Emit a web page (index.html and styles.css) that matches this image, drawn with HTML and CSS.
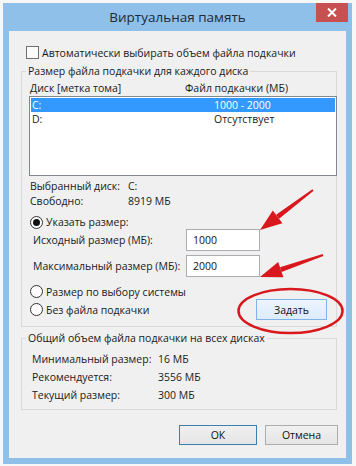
FILE: index.html
```html
<!DOCTYPE html>
<html lang="ru">

<head>
    <meta charset="UTF-8">
    <meta name="viewport" content="width=device-width, initial-scale=1.0">
    <title>Виртуальная память</title>
    <link rel="stylesheet" href="styles.css">
</head>

<body>
    <div class="window">
        <div class="titlebar">
            <span></span>
            <h1 class="title">Виртуальная память</h1>
            <button class="close" type="button" aria-label="Закрыть">
                <svg width="10" height="9" viewBox="0 0 10 9">
                    <path d="M1 0.5 L9 8.5 M9 0.5 L1 8.5" stroke="#fff" stroke-width="2" />
                </svg>
            </button>
        </div>

        <div class="content">
            <!-- Автоматический выбор -->
            <label class="check-row">
                <span class="checkbox"></span>
                Автоматически выбирать объем файла подкачки
            </label>

            <!-- Размер для каждого диска -->
            <fieldset class="group group-disks">
                <legend>Размер файла подкачки для каждого диска</legend>
                <div class="group-inner">
                    <div class="list-head">
                        <span>Диск [метка тома]</span>
                        <span>Файл подкачки (МБ)</span>
                    </div>
                    <div class="listbox">
                        <div class="list-row selected"><span>C:</span><span>1000 - 2000</span></div>
                        <div class="list-row"><span>D:</span><span>Отсутствует</span></div>
                    </div>

                    <div class="info">
                        <span>Выбранный диск:</span><span>C:</span>
                        <span>Свободно:</span><span>8919 МБ</span>
                    </div>

                    <div class="radio-row first">
                        <span class="radio checked"></span>Указать размер:
                    </div>
                    <div class="size-row">
                        <label for="initSize">Исходный размер (МБ):</label>
                        <input type="text" id="initSize" value="1000">
                    </div>
                    <div class="size-row second">
                        <label for="maxSize">Максимальный размер (МБ):</label>
                        <input type="text" id="maxSize" value="2000">
                    </div>

                    <div class="bottom-options">
                        <div class="radios">
                            <div class="radio-row"><span class="radio"></span>Размер по выбору системы</div>
                            <div class="radio-row"><span class="radio"></span>Без файла подкачки</div>
                        </div>
                        <button class="btn btn-set" type="button">Задать</button>
                    </div>
                </div>
            </fieldset>

            <!-- Общий объем -->
            <fieldset class="group group-total">
                <legend>Общий объем файла подкачки на всех дисках</legend>
                <div class="totals">
                    <span>Минимальный размер:</span><span>16 МБ</span>
                    <span>Рекомендуется:</span><span>3556 МБ</span>
                    <span>Текущий размер:</span><span>300 МБ</span>
                </div>
            </fieldset>

            <div class="actions">
                <button class="btn btn-ok" type="button">ОК</button>
                <button class="btn btn-cancel" type="button">Отмена</button>
            </div>
        </div>
    </div>

    <!-- Пометки поверх скриншота -->
    <svg class="marks" width="356" height="466" viewBox="0 0 356 466">
        <polygon fill="#d8181c" points="313.6,190.8 312.4,189.2 276.1,214.8 279.1,218.8" />
        <polygon fill="#d8181c" points="260,230 282.4,223.2 272.8,210.4" />
        <polygon fill="#d8181c" points="323.3,255.9 322.7,254.1 280.0,267.3 281.6,272.1" />
        <polygon fill="#d8181c" points="260,277 283.4,277.3 278.2,262.1" />
        <ellipse cx="290.5" cy="311" rx="52" ry="22" fill="none" stroke="#d8181c" stroke-width="2.5" />
    </svg>
</body>

</html>
```

FILE: styles.css
```css
body {
    margin: 0;
    background-color: #f7f7f7;
    font-family: "Open Sans", "Noto Sans", sans-serif;
    font-size: 10.5px;
    color: #1a1a1a;
}

.window {
    width: 349px;
    height: 461px;
    margin: 3px 0 0 3px;
    background-color: #8fc0ea;
    display: flex;
    flex-direction: column;
}

.titlebar {
    height: 28px;
    display: grid;
    grid-template-columns: 1fr auto 1fr;
}

.title {
    margin: 0;
    font-size: 13.5px;
    font-weight: normal;
    line-height: 28px;
    color: #1f2a36;
}

.close {
    justify-self: end;
    width: 32px;
    height: 19px;
    margin-right: 4px;
    padding: 0;
    border: none;
    background-color: #c75050;
    display: flex;
    align-items: center;
    justify-content: center;
}

.content {
    flex: 1;
    margin: 0 6px 6px 6px;
    background-color: #f0f0f0;
    padding-top: 14px;
}

.check-row {
    display: flex;
    align-items: center;
    height: 15px;
    padding-left: 17px;
}

.checkbox {
    width: 11px;
    height: 11px;
    border: 1px solid #707070;
    background-color: #fafafa;
    margin-right: 3px;
}

/* Групповые рамки */
.group {
    border: 1px solid #d9d9d9;
    margin: 4px 9px 0 12px;
    padding: 0;
    min-width: 0;
}

.group legend {
    padding: 0 2px;
    margin-left: 4px;
    line-height: 15px;
}

.group-inner {
    padding: 2px 0 6px 0;
}

.list-head {
    display: grid;
    grid-template-columns: 155px 1fr;
    padding-left: 8px;
    line-height: 15px;
}

.listbox {
    margin-left: 7px;
    border: 1px solid #828790;
    background-color: #fff;
    padding: 1px;
    width: 304px;
    height: 76px;
}

.list-row {
    display: grid;
    grid-template-columns: 182px 1fr;
    height: 14px;
    line-height: 14px;
    padding-left: 1px;
}

.list-row.selected {
    background-color: #3399ff;
    color: #fff;
}

.info {
    display: grid;
    grid-template-columns: 98px 1fr;
    margin: 3px 0 0 8px;
    line-height: 15px;
}

.radio-row {
    display: flex;
    align-items: center;
    height: 15px;
    padding-left: 8px;
}

.radio-row.first {
    margin-top: 6px;
    height: 14px;
}

.radio {
    width: 11px;
    height: 11px;
    border: 1px solid #333;
    border-radius: 50%;
    background-color: #fff;
    margin-right: 3px;
    display: flex;
    align-items: center;
    justify-content: center;
}

.radio.checked::after {
    content: "";
    width: 7px;
    height: 7px;
    border-radius: 50%;
    background-color: #111;
}

.size-row {
    display: grid;
    grid-template-columns: 153px 74px;
    align-items: center;
    padding-left: 11px;
    height: 22px;
}

.size-row.second {
    margin-top: 4px;
}

.size-row input {
    width: 74px;
    height: 22px;
    box-sizing: border-box;
    border: 1px solid #abadb3;
    background-color: #fff;
    font: inherit;
    color: #111;
    padding: 0 6px;
}

.bottom-options {
    display: flex;
    justify-content: space-between;
    align-items: flex-start;
    margin-top: 7px;
}

.radios {
    display: flex;
    flex-direction: column;
    gap: 3px;
}

.btn {
    height: 21px;
    padding: 0;
    border: 1px solid #acacac;
    background: linear-gradient(#f0f0f0, #e5e5e5);
    font: inherit;
    color: #111;
}

.btn-set {
    width: 71px;
    margin: 15px 9px 0 0;
    border-color: #7eb4ea;
    background: linear-gradient(#ecf4fc, #dcecfc);
}

/* Итоговые значения */
.group-total {
    margin-top: 4px;
}

.totals {
    display: grid;
    grid-template-columns: 126px 1fr;
    padding: 4px 0 5px 10px;
    line-height: 18px;
}

.actions {
    display: flex;
    justify-content: flex-end;
    gap: 8px;
    margin: 15px 8px 0 0;
}

.btn-ok {
    width: 78px;
    height: 20px;
    border-color: #3c7fb1;
}

.btn-cancel {
    width: 73px;
    height: 20px;
}

.marks {
    position: absolute;
    top: 0;
    left: 0;
    pointer-events: none;
}
```
